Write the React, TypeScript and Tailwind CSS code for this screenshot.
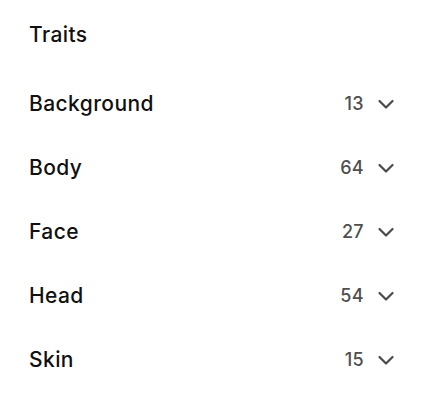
import React from "react";

const traits = [
  { name: "Background", count: 13 },
  { name: "Body", count: 64 },
  { name: "Face", count: 27 },
  { name: "Head", count: 54 },
  { name: "Skin", count: 15 },
];

function Chevron() {
  return (
    <svg width="24" height="24" viewBox="0 0 24 24" fill="none" stroke="#4a4a4a" strokeWidth="2.2" strokeLinecap="round" strokeLinejoin="round">
      <path d="M5.5 9l6.5 6.5 6.5-6.5" />
    </svg>
  );
}

export default function App() {
  return (
    <div className="w-[428px] h-[400px] bg-white pt-[21px] pl-[29px] pr-[30px]" style={{ fontFamily: "Inter, 'Noto Sans', sans-serif" }}>
      <h2 className="text-[21px] leading-7 font-medium tracking-[0.02em] text-[#111111]">Traits</h2>
      <div className="mt-[23px] flex flex-col">
        {traits.map((t) => (
          <div key={t.name} className="h-16 flex items-center justify-between">
            <span className="text-[21px] leading-7 font-medium tracking-[0.02em] text-[#111111]">{t.name}</span>
            <div className="flex items-center gap-[10px]">
              <span className="text-[18px] leading-7 font-medium tracking-[0.02em] text-[#4f4f4f]">{t.count}</span>
              <Chevron />
            </div>
          </div>
        ))}
      </div>
    </div>
  );
}
